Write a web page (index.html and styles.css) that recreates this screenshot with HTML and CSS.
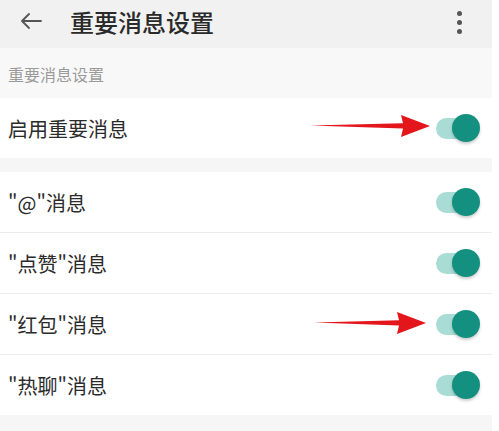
FILE: index.html
```html
<!DOCTYPE html>
<html lang="zh">
<head>
<meta charset="UTF-8" />
<meta name="viewport" content="width=device-width, initial-scale=1" />
<title>重要消息设置</title>
<link rel="stylesheet" href="styles.css">
</head>
<body>

<div class="page">
  <header class="topbar">
    <svg class="back" width="24" height="18" viewBox="0 0 24 18">
      <path d="M22 9H3M10 2L3 9l7 7" fill="none" stroke="#555" stroke-width="1.8" stroke-linecap="round" stroke-linejoin="round"/>
    </svg>
    <h1>重要消息设置</h1>
    <div class="more"><span></span><span></span><span></span></div>
  </header>

  <div class="section-label">重要消息设置</div>

  <div class="group">
    <div class="row">
      <span>启用重要消息</span>
      <div class="toggle"></div>
      <svg class="arrow arrow-1" width="120" height="24" viewBox="0 0 120 24">
        <path d="M0 11.6L93 9.2L91 1L120 12L91 23L93 14.6Z" fill="#e3161b"/>
      </svg>
    </div>
  </div>

  <div class="group">
    <div class="row"><span>"@"消息</span><div class="toggle"></div></div>
    <div class="row"><span>"点赞"消息</span><div class="toggle"></div></div>
    <div class="row">
      <span>"红包"消息</span>
      <div class="toggle"></div>
      <svg class="arrow arrow-2" width="112" height="24" viewBox="0 0 112 24">
        <path d="M0 11.6L85 9.2L83 1L112 12L83 23L85 14.6Z" fill="#e3161b"/>
      </svg>
    </div>
    <div class="row"><span>"热聊"消息</span><div class="toggle"></div></div>
  </div>
</div>

</body>
</html>
```

FILE: styles.css
```css
body {
  margin: 0;
  background: #fff;
  font-family: "Noto Sans CJK SC", "Noto Sans", sans-serif;
  color: #2b2b2b;
}
.page {
  width: 492px;
  height: 431px;
  background: #f6f6f6;
  overflow: hidden;
}
.topbar {
  height: 48px;
  background: #f1f1f1;
  display: flex;
  align-items: center;
  padding: 0 0 6px 19px;
  box-sizing: border-box;
}
.back {
  flex: none;
}
.topbar h1 {
  margin: 0 0 0 27px;
  font-size: 24px;
  font-weight: 500;
  color: #2a2a2a;
  flex: 1;
}
.more {
  display: flex;
  flex-direction: column;
  gap: 4px;
  margin-right: 30px;
  margin-top: 2px;
}
.more span {
  width: 5px;
  height: 5px;
  border-radius: 50%;
  background: #555;
}
.section-label {
  height: 50px;
  background: #f8f8f8;
  display: flex;
  align-items: center;
  padding: 2px 0 0 8px;
  box-sizing: border-box;
  font-size: 16px;
  color: #9a9a9a;
}
.group {
  background: #fff;
  margin-bottom: 14px;
}
.row {
  position: relative;
  height: 60px;
  display: flex;
  align-items: center;
  justify-content: space-between;
  padding: 0 12px 0 8px;
  font-size: 20px;
  border-bottom: 1px solid #ececec;
}
.group .row:last-child {
  border-bottom: none;
}
.toggle {
  position: relative;
  width: 36px;
  height: 21px;
  border-radius: 11px;
  background: #a9dcd4;
  margin-right: 8px;
}
.toggle::after {
  content: "";
  position: absolute;
  right: -8px;
  top: -4px;
  width: 28px;
  height: 28px;
  border-radius: 50%;
  background: #149080;
  box-shadow: 0 2px 3px rgba(0, 0, 0, 0.2);
}
.arrow {
  position: absolute;
}
.arrow-1 {
  left: 310px;
  top: 16px;
}
.arrow-2 {
  left: 314px;
  top: 17px;
}
```
